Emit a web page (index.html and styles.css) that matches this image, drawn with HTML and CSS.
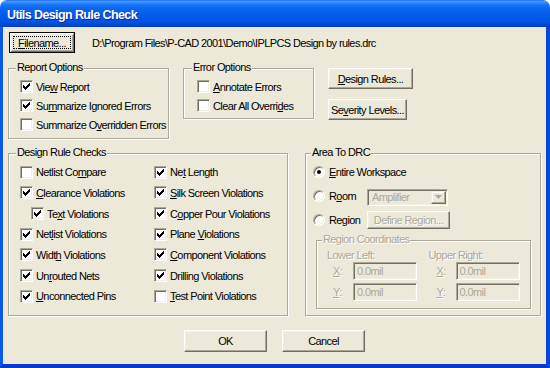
FILE: index.html
```html
<!DOCTYPE html>
<html>
<head>
<meta charset="utf-8">
<title>Utils Design Rule Check</title>
<link rel="stylesheet" href="styles.css">
</head>
<body>
<div class="window">
  <div class="titlebar"><span class="title">Utils Design Rule Check</span></div>
  <div class="frame">
    <div class="client">
      <div class="file-row">
        <div class="btn btn-default btn-file"><span class="focus"><u>F</u>ilename...</span></div>
        <span class="path">D:\Program Files\P-CAD 2001\Demo\IPLPCS Design by rules.drc</span>
      </div>

      <div class="top-row">
        <div class="group report">
          <span class="gtitle">Report Options</span>
          <div class="check-row"><span class="cb"><svg class="tick" width="7" height="7" viewBox="0 0 7 7"><path d="M0 2H1V3H2V4H3V3H4V2H5V1H6V0H7V3H6V4H5V5H4V6H3V7H2V6H1V5H0Z"/></svg></span><span class="lbl">Vie<u>w</u> Report</span></div>
          <div class="check-row"><span class="cb"><svg class="tick" width="7" height="7" viewBox="0 0 7 7"><path d="M0 2H1V3H2V4H3V3H4V2H5V1H6V0H7V3H6V4H5V5H4V6H3V7H2V6H1V5H0Z"/></svg></span><span class="lbl">Su<u>m</u>marize Ignored Errors</span></div>
          <div class="check-row"><span class="cb"></span><span class="lbl">Summarize O<u>v</u>erridden Errors</span></div>
        </div>
        <div class="group error">
          <span class="gtitle">Error Options</span>
          <div class="check-row"><span class="cb"></span><span class="lbl"><u>A</u>nnotate Errors</span></div>
          <div class="check-row"><span class="cb"></span><span class="lbl">Clear All Overri<u>d</u>es</span></div>
        </div>
        <div class="side">
          <div class="btn btn-rules"><u>D</u>esign Rules...</div>
          <div class="btn btn-severity">Se<u>v</u>erity Levels...</div>
        </div>
      </div>

      <div class="mid-row">
        <div class="group drc">
          <span class="gtitle">Design Rule Checks</span>
          <div class="drc-grid">
            <div class="check-row"><span class="cb"></span><span class="lbl">Netlist Co<u>m</u>pare</span></div>
            <div class="check-row"><span class="cb"><svg class="tick" width="7" height="7" viewBox="0 0 7 7"><path d="M0 2H1V3H2V4H3V3H4V2H5V1H6V0H7V3H6V4H5V5H4V6H3V7H2V6H1V5H0Z"/></svg></span><span class="lbl"><u>C</u>learance Violations</span></div>
            <div class="check-row indent"><span class="cb"><svg class="tick" width="7" height="7" viewBox="0 0 7 7"><path d="M0 2H1V3H2V4H3V3H4V2H5V1H6V0H7V3H6V4H5V5H4V6H3V7H2V6H1V5H0Z"/></svg></span><span class="lbl">Te<u>x</u>t Violations</span></div>
            <div class="check-row"><span class="cb"><svg class="tick" width="7" height="7" viewBox="0 0 7 7"><path d="M0 2H1V3H2V4H3V3H4V2H5V1H6V0H7V3H6V4H5V5H4V6H3V7H2V6H1V5H0Z"/></svg></span><span class="lbl">Net<u>l</u>ist Violations</span></div>
            <div class="check-row"><span class="cb"><svg class="tick" width="7" height="7" viewBox="0 0 7 7"><path d="M0 2H1V3H2V4H3V3H4V2H5V1H6V0H7V3H6V4H5V5H4V6H3V7H2V6H1V5H0Z"/></svg></span><span class="lbl">Widt<u>h</u> Violations</span></div>
            <div class="check-row"><span class="cb"><svg class="tick" width="7" height="7" viewBox="0 0 7 7"><path d="M0 2H1V3H2V4H3V3H4V2H5V1H6V0H7V3H6V4H5V5H4V6H3V7H2V6H1V5H0Z"/></svg></span><span class="lbl">Un<u>r</u>outed Nets</span></div>
            <div class="check-row"><span class="cb"><svg class="tick" width="7" height="7" viewBox="0 0 7 7"><path d="M0 2H1V3H2V4H3V3H4V2H5V1H6V0H7V3H6V4H5V5H4V6H3V7H2V6H1V5H0Z"/></svg></span><span class="lbl"><u>U</u>nconnected Pins</span></div>

            <div class="check-row"><span class="cb"><svg class="tick" width="7" height="7" viewBox="0 0 7 7"><path d="M0 2H1V3H2V4H3V3H4V2H5V1H6V0H7V3H6V4H5V5H4V6H3V7H2V6H1V5H0Z"/></svg></span><span class="lbl">Ne<u>t</u> Length</span></div>
            <div class="check-row"><span class="cb"><svg class="tick" width="7" height="7" viewBox="0 0 7 7"><path d="M0 2H1V3H2V4H3V3H4V2H5V1H6V0H7V3H6V4H5V5H4V6H3V7H2V6H1V5H0Z"/></svg></span><span class="lbl"><u>S</u>ilk Screen Violations</span></div>
            <div class="check-row"><span class="cb"><svg class="tick" width="7" height="7" viewBox="0 0 7 7"><path d="M0 2H1V3H2V4H3V3H4V2H5V1H6V0H7V3H6V4H5V5H4V6H3V7H2V6H1V5H0Z"/></svg></span><span class="lbl">C<u>o</u>pper Pour Violations</span></div>
            <div class="check-row"><span class="cb"><svg class="tick" width="7" height="7" viewBox="0 0 7 7"><path d="M0 2H1V3H2V4H3V3H4V2H5V1H6V0H7V3H6V4H5V5H4V6H3V7H2V6H1V5H0Z"/></svg></span><span class="lbl">Plane <u>V</u>iolations</span></div>
            <div class="check-row"><span class="cb"><svg class="tick" width="7" height="7" viewBox="0 0 7 7"><path d="M0 2H1V3H2V4H3V3H4V2H5V1H6V0H7V3H6V4H5V5H4V6H3V7H2V6H1V5H0Z"/></svg></span><span class="lbl"><u>C</u>omponent Violations</span></div>
            <div class="check-row"><span class="cb"><svg class="tick" width="7" height="7" viewBox="0 0 7 7"><path d="M0 2H1V3H2V4H3V3H4V2H5V1H6V0H7V3H6V4H5V5H4V6H3V7H2V6H1V5H0Z"/></svg></span><span class="lbl">Drillin<u>g</u> Violations</span></div>
            <div class="check-row"><span class="cb"></span><span class="lbl"><u>T</u>est Point Violations</span></div>
          </div>
        </div>

        <div class="group area">
          <span class="gtitle">Area To DRC</span>
          <div class="radio-row">
            <span class="radio-label"><span class="rb on"></span><span class="lbl"><u>E</u>ntire Workspace</span></span>
          </div>
          <div class="radio-row">
            <span class="radio-label"><span class="rb"></span><span class="lbl">R<u>o</u>om</span></span>
            <div class="field combo"><span class="combo-text">Amplifier</span><span class="combo-btn"><svg width="7" height="4" viewBox="0 0 7 4"><path d="M0 0H7L3.5 4Z" fill="#ACA899"/></svg></span></div>
          </div>
          <div class="radio-row">
            <span class="radio-label"><span class="rb"></span><span class="lbl">Region</span></span>
            <div class="btn btn-define disabled">Define Region...</div>
          </div>
          <div class="group coords">
            <span class="gtitle disabled">Region Coordinates</span>
            <div class="coord-cols">
              <div class="coord-col">
                <div class="coord-head disabled">Lower Left:</div>
                <div class="coord-row"><span class="coord-lbl disabled"><u>X</u>:</span><div class="field input">0.0mil</div></div>
                <div class="coord-row"><span class="coord-lbl disabled"><u>Y</u>:</span><div class="field input">0.0mil</div></div>
              </div>
              <div class="coord-col right">
                <div class="coord-head disabled">Upper Right:</div>
                <div class="coord-row"><span class="coord-lbl disabled"><u>X</u>:</span><div class="field input">0.0mil</div></div>
                <div class="coord-row"><span class="coord-lbl disabled"><u>Y</u>:</span><div class="field input">0.0mil</div></div>
              </div>
            </div>
          </div>
        </div>
      </div>

      <div class="bottom-row">
        <div class="btn btn-dlg">OK</div>
        <div class="btn btn-dlg">Cancel</div>
      </div>
    </div>
  </div>
</div>
</body>
</html>
```

FILE: styles.css
```css
* { box-sizing: border-box; }
html, body { margin: 0; padding: 0; }
body {
  width: 550px;
  height: 368px;
  overflow: hidden;
  background: #ffffff;
  font-family: "Liberation Sans", Arial, sans-serif;
  font-size: 11px;
  letter-spacing: -0.6px;
  color: #000;
}
u { text-decoration: underline; text-underline-offset: 1px; }

.window {
  height: 368px;
  display: flex;
  flex-direction: column;
  border-radius: 7px 7px 0 0;
  overflow: hidden;
}
.titlebar {
  height: 27px;
  flex: none;
  display: flex;
  align-items: center;
  padding: 2px 0 0 7px;
  background: linear-gradient(180deg, #0A5DE8 0px, #4B9BFF 1px, #2D86FF 3px, #1473F8 5px, #0C68F0 8px, #0760EC 12px, #0458E6 18px, #0252E2 22px, #0047D6 25px, #003BC0 27px);
}
.title {
  color: #fff;
  font-family: "Liberation Sans", Arial, sans-serif;
  font-weight: bold;
  font-size: 12.5px;
  letter-spacing: -0.6px;
  text-shadow: 1px 1px 0 #0A2A8C;
}
.frame {
  flex: 1;
  display: flex;
  border-left: 3px solid #0A5AE6;
  border-right: 5px solid #0845D8;
  border-bottom: 4px solid #0838CC;
}
.client {
  flex: 1;
  background: #ECE9D8;
  display: flex;
  flex-direction: column;
  padding: 5px 5px 0 5px;
}

/* buttons */
.btn {
  display: flex;
  align-items: center;
  justify-content: center;
  background: #ECE9D8;
  border: 1px solid;
  border-color: #fff #716F64 #716F64 #fff;
  box-shadow: inset -1px -1px 0 #ACA899, inset 1px 1px 0 #F1EFE2;
  white-space: nowrap;
}
.btn-default {
  border: 1px solid #000;
  box-shadow: inset 1px 1px 0 #fff, inset -1px -1px 0 #716F64, inset 2px 2px 0 #F1EFE2, inset -2px -2px 0 #ACA899;
  padding: 3px;
}
.focus {
  flex: 1;
  align-self: stretch;
  display: flex;
  align-items: center;
  justify-content: center;
  border: 1px dotted #000;
}

.file-row {
  display: flex;
  align-items: center;
  padding-left: 1px;
}
.btn-file { width: 66px; height: 21px; }
.path { margin-left: 17px; }

/* group boxes */
.group {
  position: relative;
  border: 1px solid #ACA899;
  box-shadow: inset 1px 1px 0 #fff, 1px 1px 0 #fff;
}
.gtitle {
  position: absolute;
  top: -8px;
  left: 7px;
  padding: 0 1px;
  line-height: 13px;
  background: #ECE9D8;
  white-space: nowrap;
}

.top-row {
  display: flex;
  align-items: flex-start;
  margin-top: 15px;
}
.report { width: 161px; height: 71px; padding: 8px 0 0 11px; }
.error { width: 131px; height: 51px; margin-left: 14px; padding: 8px 0 0 13px; }
.error .gtitle { left: 8px; }
.side {
  margin-left: 14px;
  display: flex;
  flex-direction: column;
  align-items: flex-start;
  gap: 10px;
}
.btn-rules { width: 85px; height: 21px; }
.btn-severity { width: 79px; height: 21px; }

/* checkboxes */
.check-row {
  display: flex;
  align-items: center;
  height: 19px;
  white-space: nowrap;
}
.cb {
  flex: none;
  width: 13px;
  height: 13px;
  background: #fff;
  border: 1px solid;
  border-color: #ACA899 #fff #fff #ACA899;
  box-shadow: inset 1px 1px 0 #716F64, inset -1px -1px 0 #F1EFE2;
}
.tick {
  display: block;
  margin: 2px 0 0 2px;
  fill: #000;
  shape-rendering: crispEdges;
}
.lbl { margin-left: 3px; }

.mid-row {
  display: flex;
  align-items: flex-start;
  margin-top: 14px;
}
.drc { width: 280px; height: 163px; padding: 8px 0 0 11px; }
.drc-grid {
  display: grid;
  grid-template-columns: 134px 1fr;
  grid-template-rows: repeat(7, 20.67px);
  grid-auto-flow: column;
}
.drc-grid .check-row { height: auto; }
.indent { padding-left: 11px; }

/* area to DRC */
.area { width: 236px; height: 163px; margin-left: 17px; padding: 6px 0 0 7px; }
.area > .gtitle { left: 5px; }
.radio-row {
  display: flex;
  align-items: center;
  height: 24px;
}
.radio-label {
  flex: none;
  width: 54px;
  display: flex;
  align-items: center;
  white-space: nowrap;
}
.radio-label .lbl { margin-left: 4px; }
.rb {
  flex: none;
  position: relative;
  width: 12px;
  height: 12px;
  border-radius: 50%;
  background: #fff;
  border: 1px solid;
  border-color: #ACA899 #fff #fff #ACA899;
  box-shadow: inset 1px 1px 0 #716F64, inset -1px -1px 0 #F1EFE2;
}
.rb.on::after {
  content: "";
  position: absolute;
  left: 3px;
  top: 3px;
  width: 4px;
  height: 4px;
  border-radius: 50%;
  background: #000;
}

.field {
  display: flex;
  align-items: center;
  background: #ECE9D8;
  color: #ACA899;
  border: 1px solid;
  border-color: #ACA899 #fff #fff #ACA899;
  box-shadow: inset 1px 1px 0 #716F64, inset -1px -1px 0 #F1EFE2;
  white-space: nowrap;
}
.combo {
  width: 81px;
  height: 17px;
  padding: 1px 1px 1px 4px;
  margin-top: 2px;
}
.combo-text { flex: 1; }
.combo-btn {
  align-self: stretch;
  width: 15px;
  display: flex;
  align-items: center;
  justify-content: center;
  border: 1px solid;
  border-color: #F1EFE2 #716F64 #716F64 #F1EFE2;
  box-shadow: inset -1px -1px 0 #ACA899, inset 1px 1px 0 #fff;
}
.btn-define { width: 83px; height: 18px; }
.disabled {
  color: #ACA899;
  text-shadow: 1px 1px 0 #fff;
}

.coords {
  width: 215px;
  height: 69px;
  margin: 8px 0 0 3px;
  padding: 7px 0 0 10px;
}
.coords > .gtitle { left: 5px; }
.coord-cols { display: flex; }
.coord-col { width: 103px; }
.coord-head { height: 14px; line-height: 14px; white-space: nowrap; }
.coord-row {
  display: flex;
  align-items: center;
  height: 18px;
  padding-left: 6px;
}
.coord-row + .coord-row { margin-top: 3px; }
.coord-col.right .coord-row { padding-left: 8px; }
.coord-lbl { width: 20px; }
.coord-col.right .coord-lbl { width: 19px; }
.input {
  width: 64px;
  height: 18px;
  padding-left: 3px;
}

.bottom-row {
  display: flex;
  justify-content: center;
  gap: 15px;
  margin-top: 14px;
}
.btn-dlg { width: 83px; height: 22px; }
```
